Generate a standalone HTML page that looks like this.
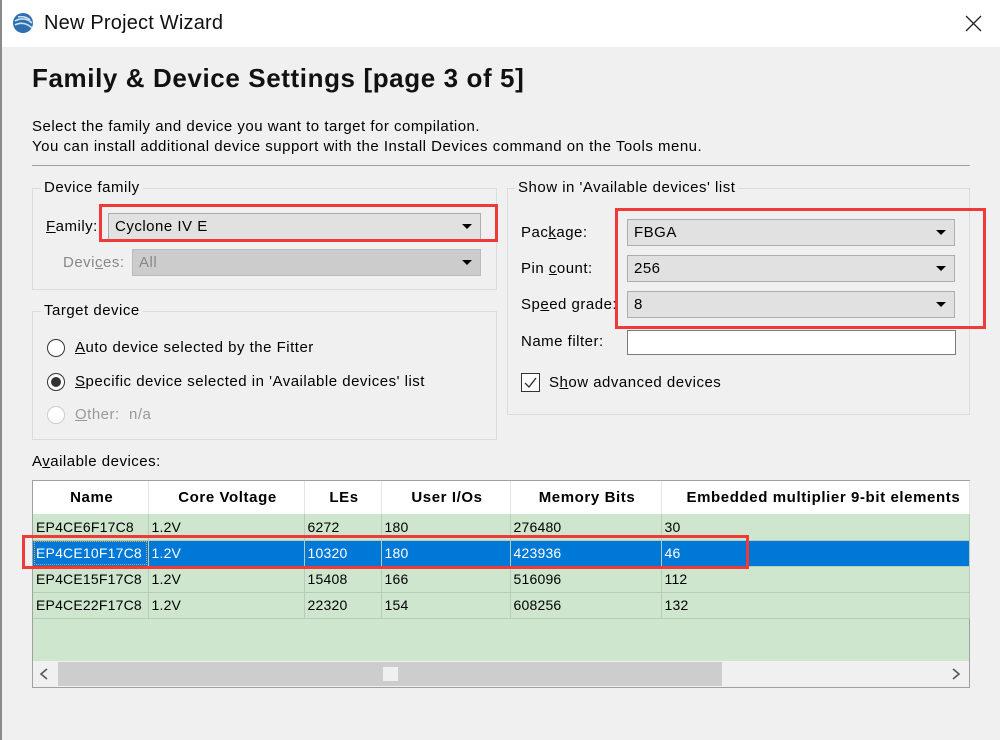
<!DOCTYPE html>
<html><head><meta charset="utf-8"><style>
*{margin:0;padding:0;box-sizing:border-box}
body{width:1000px;height:740px;background:#f0f0f0;font-family:"Liberation Sans",sans-serif;font-size:15px;letter-spacing:0.5px;color:#000;position:relative;overflow:hidden}
.a{position:absolute;white-space:nowrap}
.grp{position:absolute;border:1px solid #dcdcdc}
.leg{position:absolute;background:#f0f0f0;padding:0 3px}
.cb{position:absolute;background:#e1e1e1;border:1px solid #adadad;height:27px;line-height:25px;padding-left:6px}
.cb:after{content:"";position:absolute;right:8px;top:10px;border-left:5px solid transparent;border-right:5px solid transparent;border-top:5px solid #000}
.red{position:absolute;border:3px solid #f03a3a}
.rad{position:absolute;width:18px;height:18px;border-radius:50%;border:1px solid #333;background:#fff}
table{border-collapse:collapse;position:absolute;left:33px;top:481px;table-layout:fixed;letter-spacing:0.2px}
td,th{height:26px;border-right:1px solid #b8cdb8;border-bottom:1px solid #b8cdb8;padding-left:3px;font-weight:normal;text-align:left;font-size:14px;white-space:nowrap;overflow:hidden}
th{height:33px;background:#fff;font-weight:bold;font-size:15px;text-align:center;border-right:1px solid #e4e4e4;border-bottom:none;letter-spacing:0.6px}
tr.g td{background:#cde6cd}
tr.s td{background:#0078d7;color:#fff}
u{text-decoration:underline}
</style></head><body>
<div class="a" style="left:0;top:0;width:1000px;height:47px;background:#fff"></div>
<div class="a" style="left:0;top:0;width:2px;height:740px;background:#8a8a8a"></div>
<svg class="a" style="left:12px;top:12px" width="23" height="23" viewBox="0 0 23 23"><circle cx="11" cy="11" r="10" fill="#2e6fb0"/><path d="M3 9c5-3 12-3 17 2M3 13c5-3 12-2 17 3M6 5c4-1 9 0 12 3" stroke="#cfe3f5" stroke-width="1.6" fill="none"/></svg>
<div class="a" style="left:44px;top:12px;font-size:20px;letter-spacing:0.2px;color:#111">New Project Wizard</div>
<svg class="a" style="left:965px;top:15px" width="17" height="17"><path d="M1 1L16 16M16 1L1 16" stroke="#222" stroke-width="1.3"/></svg>
<div class="a" style="left:32px;top:63px;font-size:26px;letter-spacing:0.6px;font-weight:bold;color:#111">Family &amp; Device Settings [page 3 of 5]</div>
<div class="a" style="left:32px;top:118px">Select the family and device you want to target for compilation.</div>
<div class="a" style="left:32px;top:138px">You can install additional device support with the Install Devices command on the Tools menu.</div>
<div class="a" style="left:32px;top:165px;width:938px;height:1px;background:#a0a0a0"></div>

<div class="grp" style="left:32px;top:188px;width:465px;height:102px"></div>
<div class="leg" style="left:41px;top:179px">Device family</div>
<div class="a" style="left:46px;top:218px"><u>F</u>amily:</div>
<div class="cb" style="left:108px;top:213px;width:373px">Cyclone IV E</div>
<div class="a" style="left:63px;top:254px;color:#888">Devi<u>c</u>es:</div>
<div class="cb" style="left:132px;top:249px;width:349px;background:#ccc;border-color:#bbb;color:#888">All</div>
<div class="red" style="left:99px;top:204px;width:399px;height:38px"></div>

<div class="grp" style="left:32px;top:311px;width:465px;height:129px"></div>
<div class="leg" style="left:41px;top:302px">Target device</div>
<div class="rad" style="left:47px;top:339px"></div>
<div class="a" style="left:75px;top:339px"><u>A</u>uto device selected by the Fitter</div>
<div class="rad" style="left:47px;top:373px"></div><div class="a" style="left:51px;top:377px;width:10px;height:10px;border-radius:50%;background:#333"></div>
<div class="a" style="left:75px;top:373px"><u>S</u>pecific device selected in 'Available devices' list</div>
<div class="rad" style="left:47px;top:406px;border-color:#ccc"></div>
<div class="a" style="left:75px;top:406px;color:#999"><u>O</u>ther:&nbsp; n/a</div>
<div class="a" style="left:32px;top:453px">A<u>v</u>ailable devices:</div>

<div class="grp" style="left:507px;top:188px;width:463px;height:227px"></div>
<div class="leg" style="left:515px;top:179px">Show in 'Available devices' list</div>
<div class="a" style="left:521px;top:224px">Pac<u>k</u>age:</div>
<div class="a" style="left:521px;top:260px">Pin <u>c</u>ount:</div>
<div class="a" style="left:521px;top:296px">Sp<u>e</u>ed grade:</div>
<div class="a" style="left:521px;top:333px">Name filter:</div>
<div class="cb" style="left:627px;top:219px;width:328px">FBGA</div>
<div class="cb" style="left:627px;top:255px;width:328px">256</div>
<div class="cb" style="left:627px;top:291px;width:328px">8</div>
<div class="a" style="left:627px;top:330px;width:329px;height:25px;background:#fff;border:1px solid #7a7a7a"></div>
<div class="red" style="left:615px;top:208px;width:371px;height:121px"></div>
<div class="a" style="left:521px;top:373px;width:19px;height:19px;border:1px solid #333;background:#fff"></div>
<svg class="a" style="left:523px;top:375px" width="15" height="15"><path d="M2 8L6 12L13 3" stroke="#333" stroke-width="1.4" fill="none"/></svg>
<div class="a" style="left:549px;top:374px">S<u>h</u>ow advanced devices</div>

<div class="a" style="left:32px;top:480px;width:938px;height:208px;border:1px solid #a0a0a0;background:#cde6cd"></div>
<table>
<colgroup><col style="width:115px"><col style="width:156px"><col style="width:77px"><col style="width:129px"><col style="width:151px"><col style="width:308px"></colgroup>
<tr><th>Name</th><th>Core Voltage</th><th>LEs</th><th>User I/Os</th><th>Memory Bits</th><th style="text-align:left;padding-left:25px">Embedded multiplier 9-bit elements</th></tr>
<tr class="g"><td>EP4CE6F17C8</td><td>1.2V</td><td>6272</td><td>180</td><td>276480</td><td>30</td></tr>
<tr class="s"><td style="outline:1px dotted #f0a040;outline-offset:-2px">EP4CE10F17C8</td><td>1.2V</td><td>10320</td><td>180</td><td>423936</td><td>46</td></tr>
<tr class="g"><td>EP4CE15F17C8</td><td>1.2V</td><td>15408</td><td>166</td><td>516096</td><td>112</td></tr>
<tr class="g"><td>EP4CE22F17C8</td><td>1.2V</td><td>22320</td><td>154</td><td>608256</td><td>132</td></tr>
</table>
<div class="a" style="left:33px;top:661px;width:936px;height:26px;background:#f0f0f0"></div>
<div class="a" style="left:58px;top:662px;width:664px;height:24px;background:#cdcdcd"></div>
<div class="a" style="left:383px;top:667px;width:15px;height:14px;background:#f0f0f0"></div>
<svg class="a" style="left:38px;top:667px" width="12" height="14"><path d="M9 2L3 7L9 12" stroke="#555" stroke-width="1.6" fill="none"/></svg>
<svg class="a" style="left:950px;top:667px" width="12" height="14"><path d="M3 2L9 7L3 12" stroke="#555" stroke-width="1.6" fill="none"/></svg>
<div class="red" style="left:22px;top:535px;width:727px;height:34px"></div>
</body></html>
